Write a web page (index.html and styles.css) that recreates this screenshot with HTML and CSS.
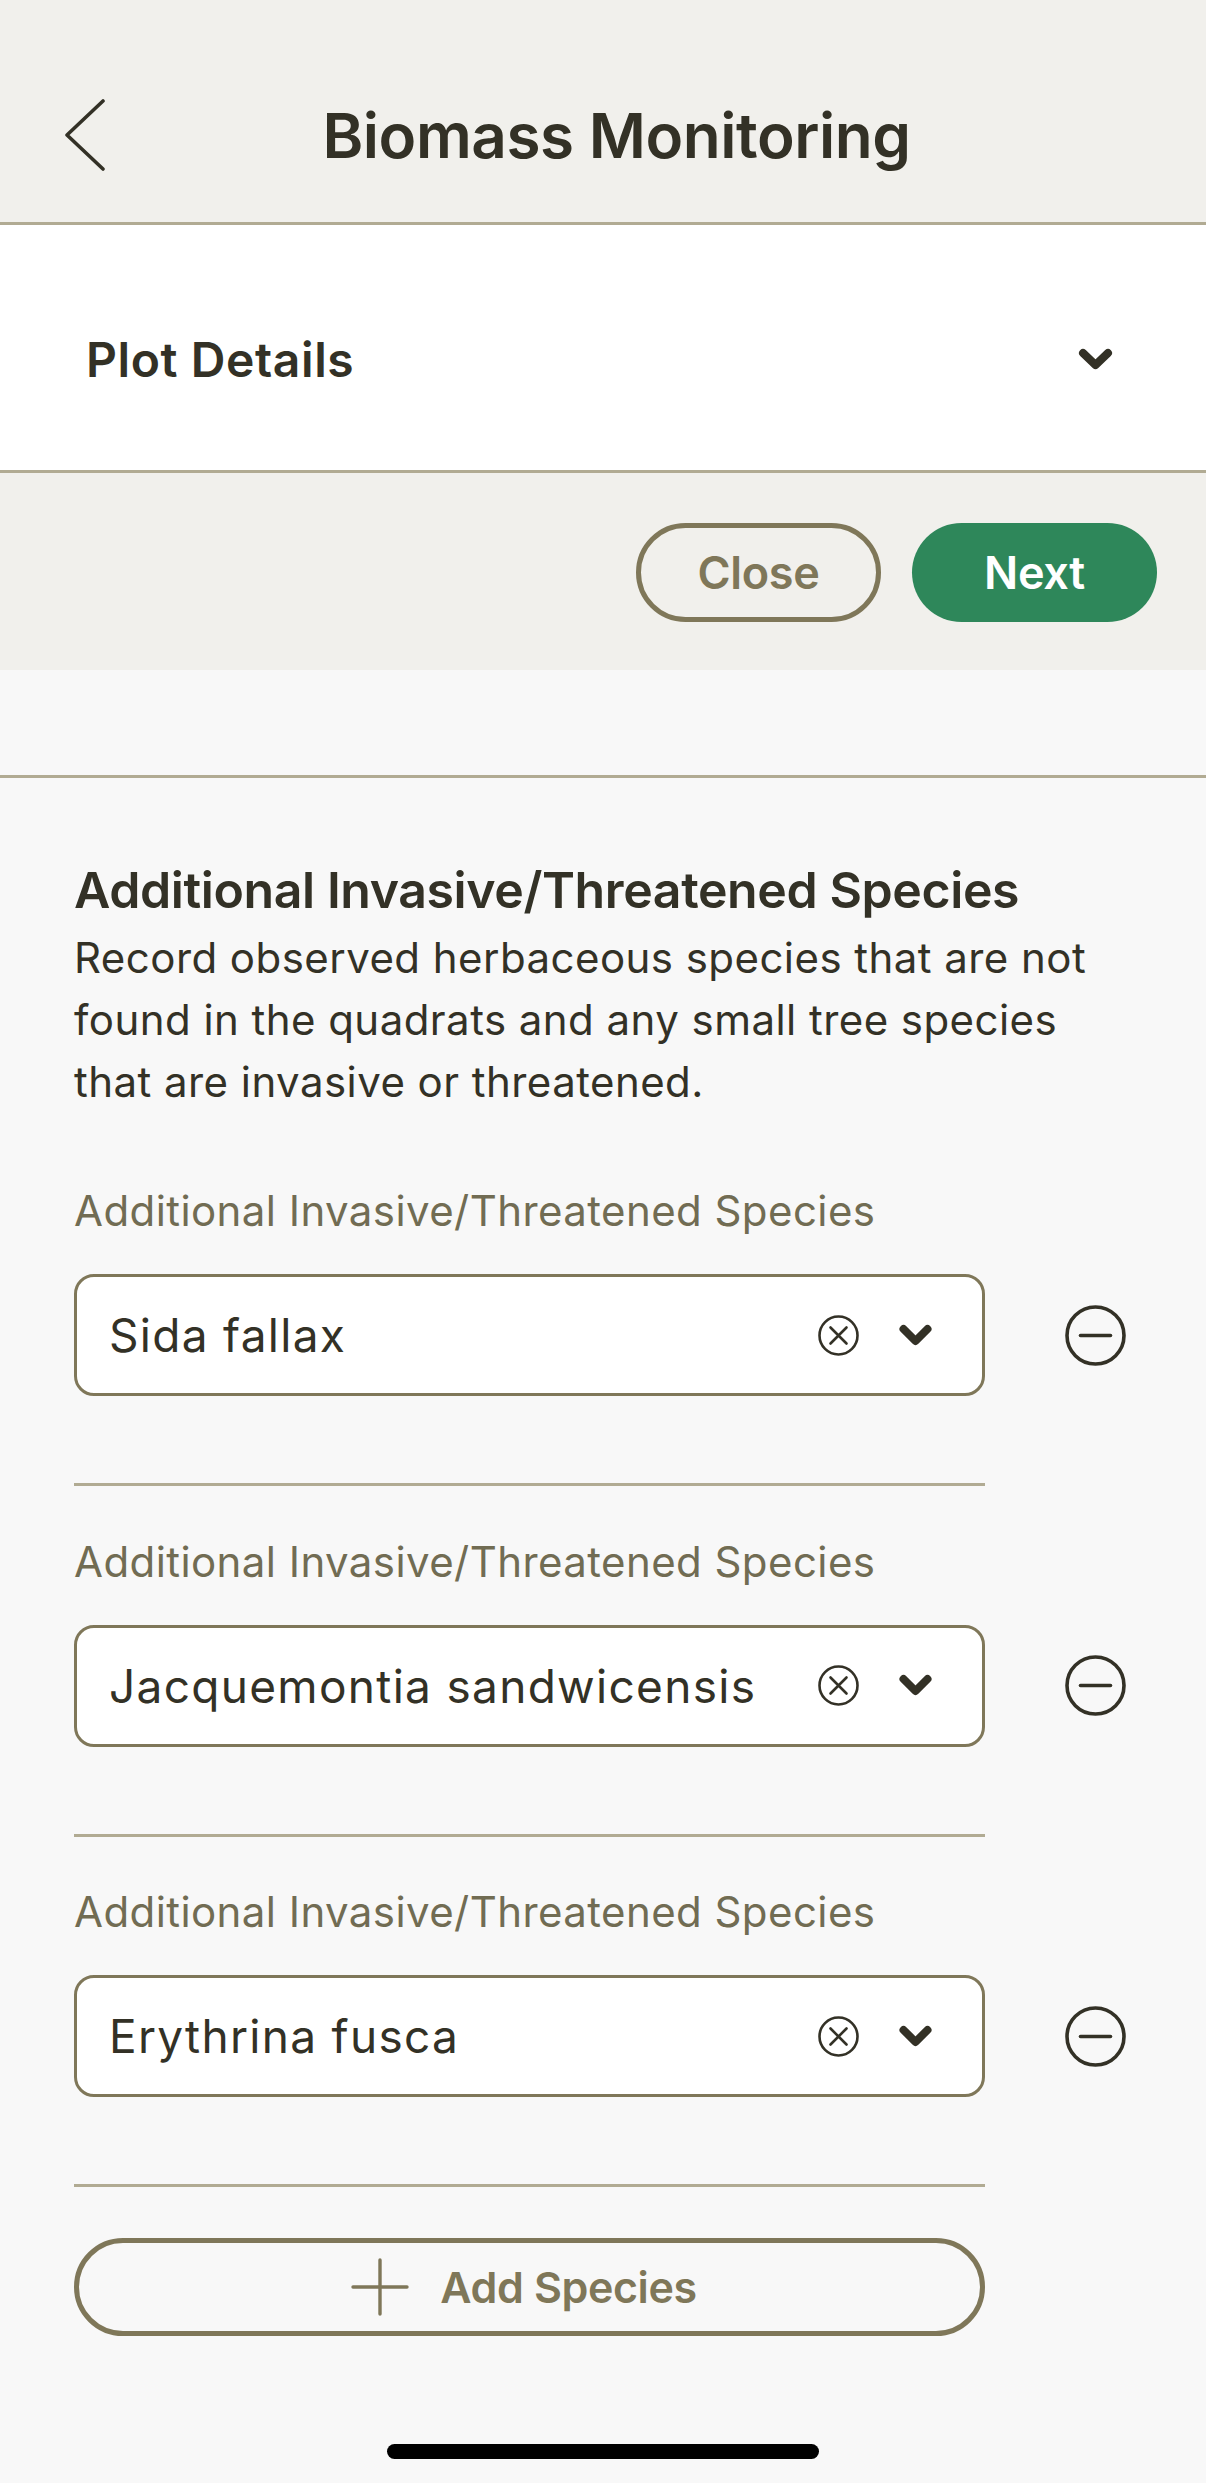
FILE: index.html
```html
<!DOCTYPE html>
<html lang="en">
<head>
<meta charset="utf-8">
<title>Biomass Monitoring</title>
<link rel="stylesheet" href="styles.css">
</head>
<body>
<div class="app">
  <header class="topbar">
    <button class="back" aria-label="Back">
      <svg width="40" height="72" viewBox="0 0 40 72"><polyline points="38,2 2,36 38,70" fill="none" stroke="#333126" stroke-width="3.6" stroke-linecap="round" stroke-linejoin="round"/></svg>
    </button>
    <h1 class="title">Biomass Monitoring</h1>
    <span class="topbar-spacer"></span>
  </header>

  <section class="accordion">
    <span class="acc-title">Plot Details</span>
    <svg class="acc-chev" width="35" height="23" viewBox="0 0 35 23"><polyline points="5,5 17.5,17 30,5" fill="none" stroke="#333126" stroke-width="8" stroke-linecap="round" stroke-linejoin="round"/></svg>
  </section>

  <div class="actions">
    <button class="btn btn-outline">Close</button>
    <button class="btn btn-primary">Next</button>
  </div>

  <div class="spacer"></div>

  <main class="content">
    <h2 class="heading">Additional Invasive/Threatened Species</h2>
    <p class="desc">Record observed herbaceous species that are not found in the quadrats and any small tree species that are invasive or threatened.</p>

    <div class="species-list">
      <div class="species-item">
        <div class="field-label">Additional Invasive/Threatened Species</div>
        <div class="field-row">
          <div class="select">
            <span class="select-value">Sida fallax</span>
            <svg class="clear" width="41" height="41" viewBox="0 0 41 41"><circle cx="20.5" cy="20.5" r="19" fill="none" stroke="#333126" stroke-width="2.6"/><path d="M12.5 12.5 L28.5 28.5 M28.5 12.5 L12.5 28.5" stroke="#333126" stroke-width="2.6" stroke-linecap="round"/></svg>
            <svg class="caret" width="33" height="23" viewBox="0 0 33 23"><polyline points="4.5,5 16.5,17 28.5,5" fill="none" stroke="#333126" stroke-width="8" stroke-linecap="round" stroke-linejoin="round"/></svg>
          </div>
          <button class="remove" aria-label="Remove">
            <svg width="61" height="61" viewBox="0 0 61 61"><circle cx="30.5" cy="30.5" r="28.5" fill="none" stroke="#333126" stroke-width="3.6"/><path d="M15.5 30.5 H45.5" stroke="#333126" stroke-width="3.6" stroke-linecap="round"/></svg>
          </button>
        </div>
        <div class="divider"></div>
      </div>

      <div class="species-item">
        <div class="field-label">Additional Invasive/Threatened Species</div>
        <div class="field-row">
          <div class="select">
            <span class="select-value">Jacquemontia sandwicensis</span>
            <svg class="clear" width="41" height="41" viewBox="0 0 41 41"><circle cx="20.5" cy="20.5" r="19" fill="none" stroke="#333126" stroke-width="2.6"/><path d="M12.5 12.5 L28.5 28.5 M28.5 12.5 L12.5 28.5" stroke="#333126" stroke-width="2.6" stroke-linecap="round"/></svg>
            <svg class="caret" width="33" height="23" viewBox="0 0 33 23"><polyline points="4.5,5 16.5,17 28.5,5" fill="none" stroke="#333126" stroke-width="8" stroke-linecap="round" stroke-linejoin="round"/></svg>
          </div>
          <button class="remove" aria-label="Remove">
            <svg width="61" height="61" viewBox="0 0 61 61"><circle cx="30.5" cy="30.5" r="28.5" fill="none" stroke="#333126" stroke-width="3.6"/><path d="M15.5 30.5 H45.5" stroke="#333126" stroke-width="3.6" stroke-linecap="round"/></svg>
          </button>
        </div>
        <div class="divider"></div>
      </div>

      <div class="species-item">
        <div class="field-label">Additional Invasive/Threatened Species</div>
        <div class="field-row">
          <div class="select">
            <span class="select-value">Erythrina fusca</span>
            <svg class="clear" width="41" height="41" viewBox="0 0 41 41"><circle cx="20.5" cy="20.5" r="19" fill="none" stroke="#333126" stroke-width="2.6"/><path d="M12.5 12.5 L28.5 28.5 M28.5 12.5 L12.5 28.5" stroke="#333126" stroke-width="2.6" stroke-linecap="round"/></svg>
            <svg class="caret" width="33" height="23" viewBox="0 0 33 23"><polyline points="4.5,5 16.5,17 28.5,5" fill="none" stroke="#333126" stroke-width="8" stroke-linecap="round" stroke-linejoin="round"/></svg>
          </div>
          <button class="remove" aria-label="Remove">
            <svg width="61" height="61" viewBox="0 0 61 61"><circle cx="30.5" cy="30.5" r="28.5" fill="none" stroke="#333126" stroke-width="3.6"/><path d="M15.5 30.5 H45.5" stroke="#333126" stroke-width="3.6" stroke-linecap="round"/></svg>
          </button>
        </div>
        <div class="divider"></div>
      </div>
    </div>

    <button class="add-btn">
      <svg width="58" height="58" viewBox="0 0 58 58"><path d="M29 2 V56 M2 29 H56" stroke="#7f7759" stroke-width="3.4" stroke-linecap="round"/></svg>
      <span>Add Species</span>
    </button>
  </main>

  <div class="home-indicator"></div>
</div>
</body>
</html>
```

FILE: styles.css
```css
* {
  box-sizing: border-box;
}

html, body {
  margin: 0;
  padding: 0;
  background: #f8f8f8;
}

body {
  font-family: Inter, "Noto Sans", "Liberation Sans", sans-serif;
  color: #333126;
}

button {
  font-family: inherit;
  background: none;
  border: none;
  padding: 0;
  margin: 0;
  cursor: pointer;
}

.app {
  width: 1206px;
  min-height: 2483px;
  background: #f8f8f8;
  display: flex;
  flex-direction: column;
}

/* Top bar */
.topbar {
  height: 225px;
  padding-top: 48px;
  background: #f1f0ec;
  border-bottom: 3px solid #b1ab93;
  display: grid;
  grid-template-columns: 126px 1fr 99px;
  align-items: center;
}

.back {
  display: flex;
  align-items: center;
  padding-left: 65px;
  height: 72px;
}

.title {
  margin: 0;
  text-align: center;
  font-size: 62px;
  line-height: 75px;
  font-weight: 600;
  letter-spacing: -0.45px;
  color: #333126;
}

/* Accordion */
.accordion {
  height: 248px;
  background: #ffffff;
  border-bottom: 3px solid #b1ab93;
  display: flex;
  align-items: center;
  justify-content: space-between;
  padding: 24px 93px 0 86px;
}

.acc-title {
  font-size: 48px;
  line-height: 58px;
  font-weight: 600;
  letter-spacing: 0.6px;
  color: #333126;
}

/* Action buttons */
.actions {
  height: 197px;
  background: #f1f0ec;
  display: flex;
  justify-content: flex-end;
  align-items: center;
  gap: 31px;
  padding: 2px 49px 0 0;
}

.btn {
  width: 245px;
  height: 99px;
  border-radius: 50px;
  font-size: 45px;
  font-weight: 600;
  letter-spacing: -0.3px;
  display: flex;
  align-items: center;
  justify-content: center;
}

.btn-outline {
  border: 5px solid #7f7759;
  color: #7f7759;
  background: transparent;
}

.btn-primary {
  background: #2e875a;
  color: #ffffff;
}

.spacer {
  height: 108px;
  border-bottom: 3px solid #b1ab93;
}

/* Content */
.content {
  padding: 82px 74px 0 74px;
}

.heading {
  margin: 0 0 7px 0;
  font-size: 50px;
  line-height: 60px;
  font-weight: 600;
  color: #333126;
  letter-spacing: -0.4px;
}

.desc {
  margin: 0;
  max-width: 1040px;
  font-size: 42px;
  line-height: 62px;
  font-weight: 400;
  letter-spacing: 0.45px;
  color: #333126;
}

.species-list {
  margin-top: 73px;
  display: flex;
  flex-direction: column;
}

.species-item {
  display: flex;
  flex-direction: column;
}

.field-label {
  font-size: 42px;
  line-height: 50px;
  letter-spacing: 0.42px;
  color: #716c53;
  margin-bottom: 38px;
}

.field-row {
  display: flex;
  align-items: center;
}

.select {
  width: 911px;
  height: 122px;
  background: #ffffff;
  border: 3px solid #7f7759;
  border-radius: 20px;
  display: flex;
  align-items: center;
  padding: 0 50px 0 32px;
}

.select-value {
  flex: 1;
  font-size: 46px;
  letter-spacing: 1.3px;
  color: #333126;
  white-space: nowrap;
}

.clear {
  margin-right: 40px;
  flex: none;
}

.caret {
  flex: none;
}

.remove {
  margin-left: 80px;
  width: 61px;
  height: 61px;
  display: flex;
}

.divider {
  width: 911px;
  height: 3px;
  background: #b1ab93;
  margin-top: 87px;
  margin-bottom: 50.5px;
}

.add-btn {
  width: 911px;
  height: 98px;
  border: 5px solid #7f7759;
  border-radius: 50px;
  display: flex;
  align-items: center;
  justify-content: center;
  gap: 31px;
  padding-right: 11px;
  color: #7f7759;
  font-size: 43px;
  font-weight: 600;
  letter-spacing: -0.4px;
}

.home-indicator {
  width: 432px;
  height: 15px;
  background: #000000;
  border-radius: 8px;
  margin: 108px auto 0 auto;
}
```
